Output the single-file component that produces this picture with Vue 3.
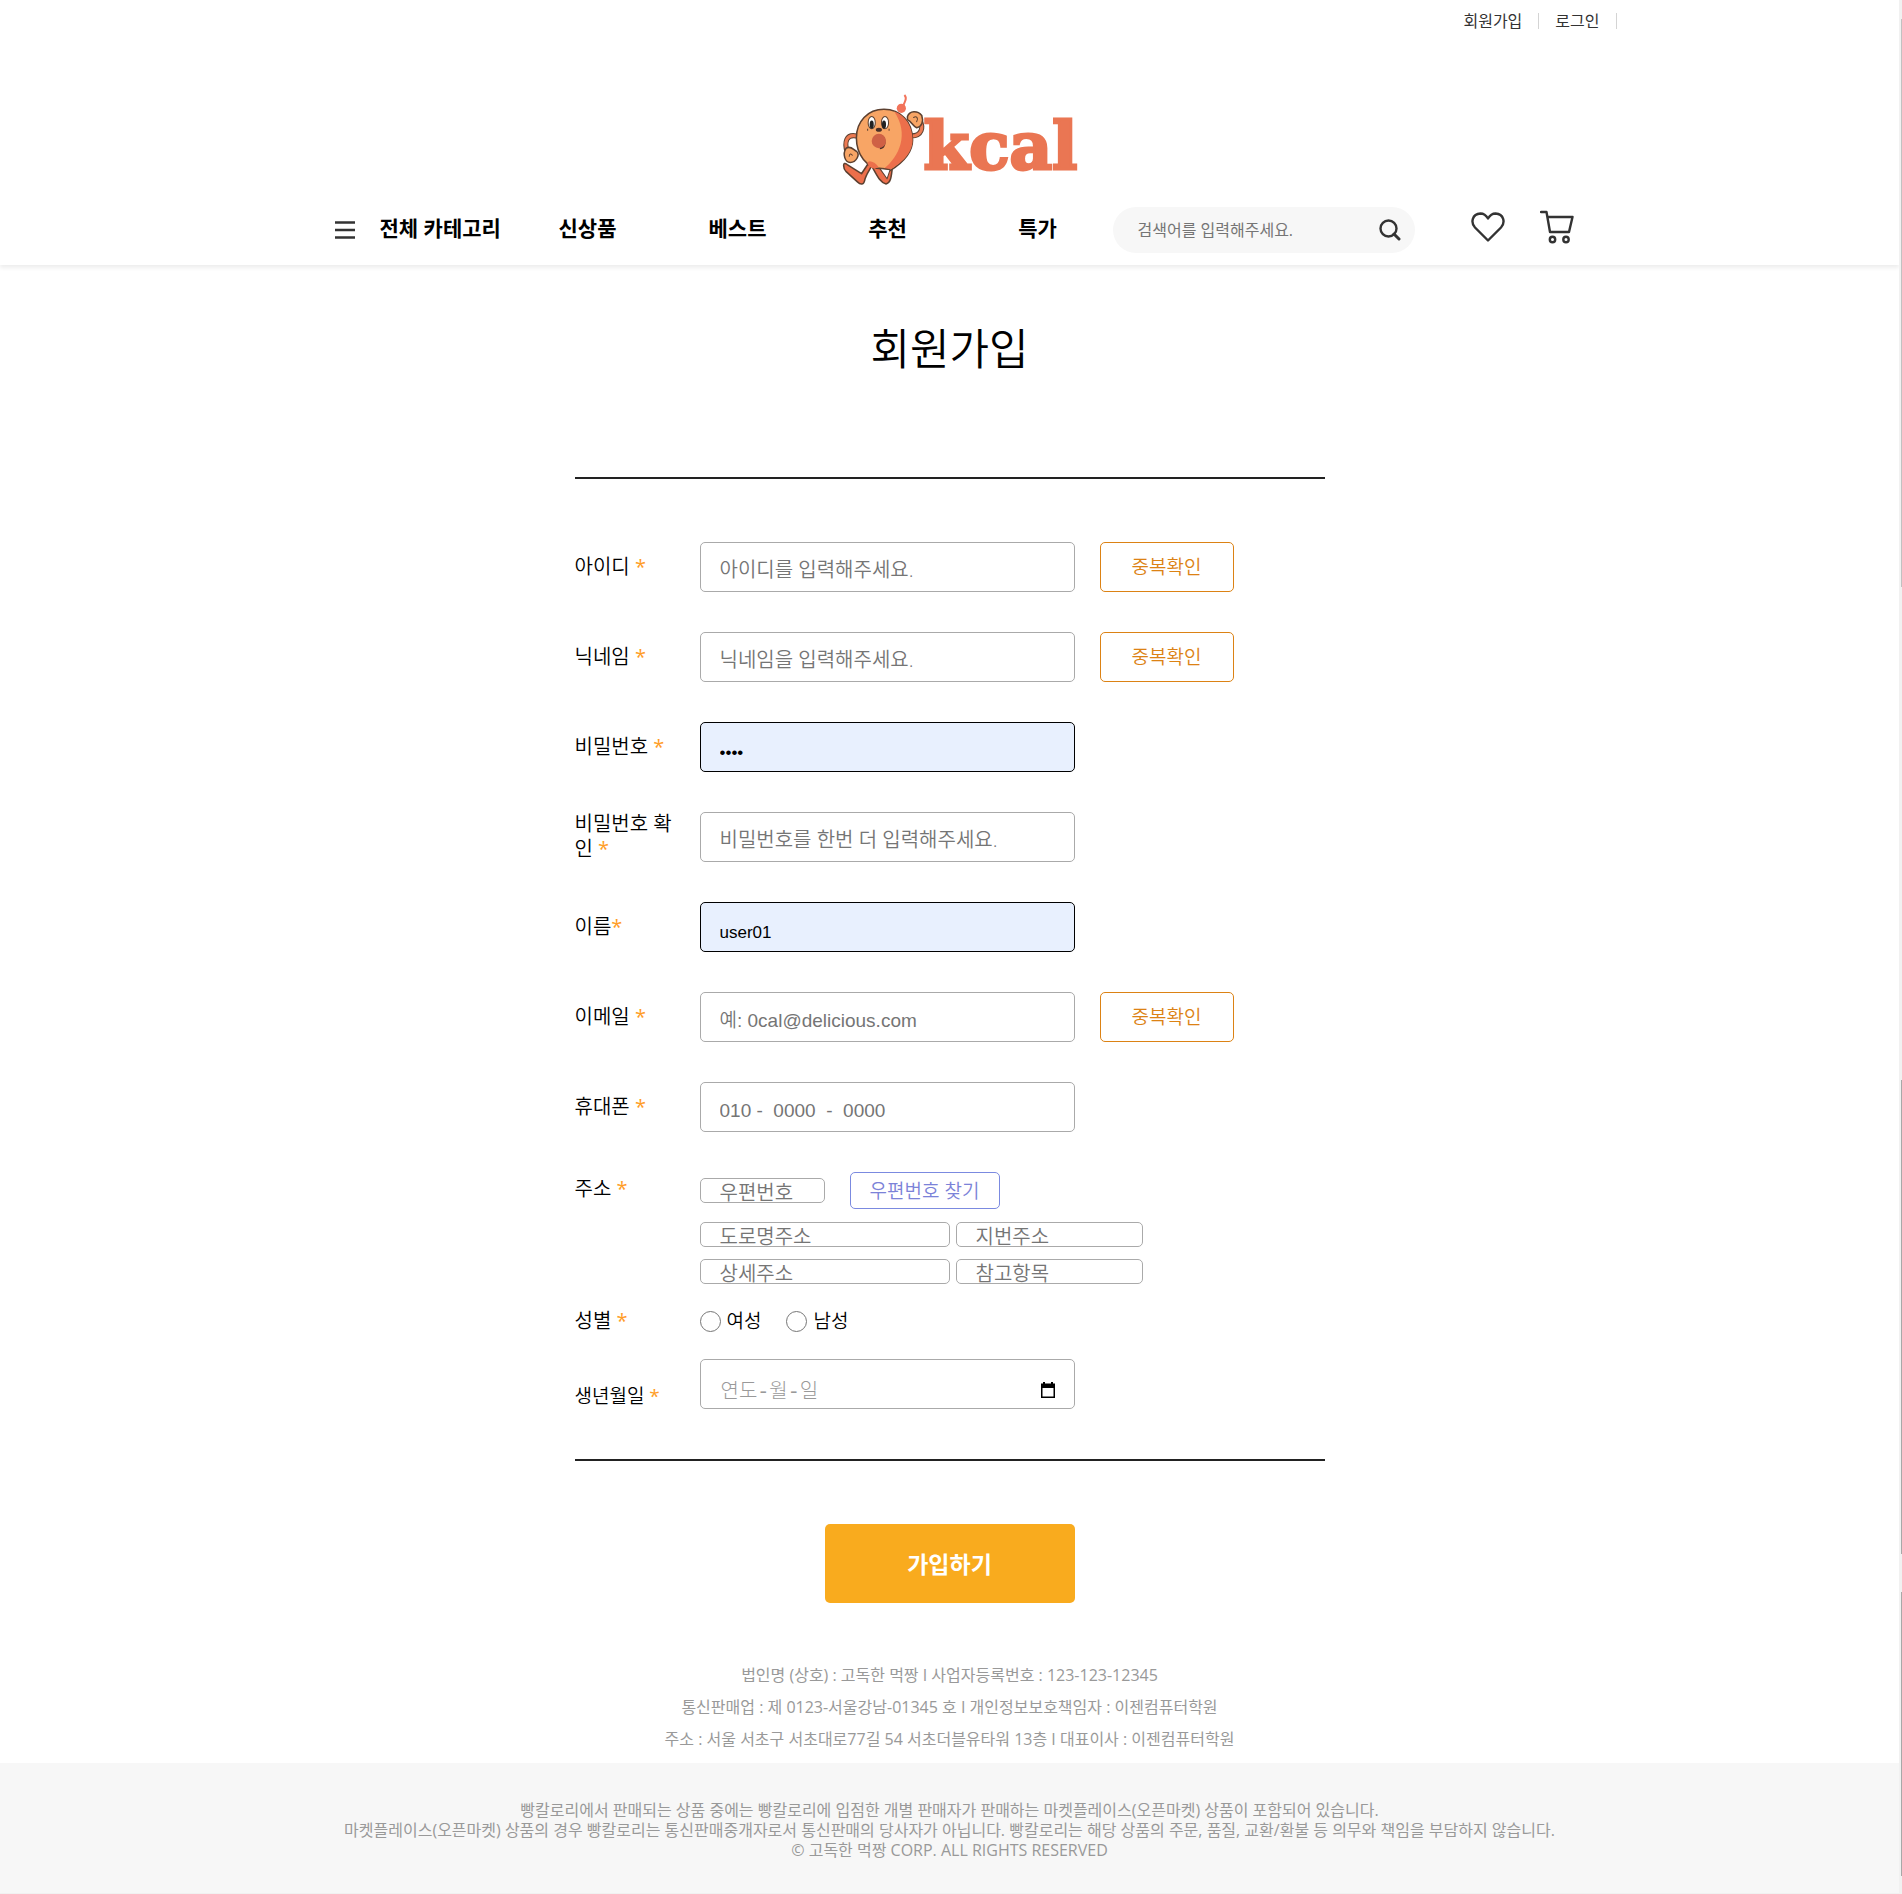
<script setup>
import { ref } from 'vue'

const menus = ['신상품', '베스트', '추천', '특가']

const fields = [
  { id: 'userId', label: '아이디', placeholder: '아이디를 입력해주세요.', check: true },
  { id: 'nickname', label: '닉네임', placeholder: '닉네임을 입력해주세요.', check: true },
  { id: 'password', label: '비밀번호', type: 'password', value: '1234' },
  { id: 'passwordCheck', label: '비밀번호 확인', type: 'password', placeholder: '비밀번호를 한번 더 입력해주세요.' },
  { id: 'userName', label: '이름', value: 'user01', tight: true },
  { id: 'email', label: '이메일', placeholder: '예: 0cal@delicious.com', check: true, latin: true },
  { id: 'phone', label: '휴대폰', placeholder: '010 -  0000  -  0000', latin: true },
]
const values = ref(Object.fromEntries(fields.map((f) => [f.id, f.value || ''])))
const gender = ref('')
</script>

<template>
  <div class="page">
    <div class="content">
      <header class="header">
        <div class="inner">
          <nav class="user-links" aria-label="회원 메뉴">
            <a href="#join">회원가입</a>
            <a href="#login">로그인</a>
          </nav>
          <a href="#home" class="logo" aria-label="kcal">
            <svg class="mascot" viewBox="0 0 84 92" width="86" height="94" aria-hidden="true">
              <g stroke-linecap="round" stroke-linejoin="round">
                <path d="M14 42 C4 40 2 48 5 58" fill="none" stroke="#5c4030" stroke-width="5" />
                <path d="M14 42 C4 40 2 48 5 58" fill="none" stroke="#ec7a52" stroke-width="3" />
                <path d="M68 42 C78 42 80 34 76 26" fill="none" stroke="#5c4030" stroke-width="5" />
                <path d="M68 42 C78 42 80 34 76 26" fill="none" stroke="#ec7a52" stroke-width="3" />
                <path d="M5 70 C0 66 1 74 4 77 L15 87 C18 90 21 90 22 86 C23 80 28 74 29 71 L25 70 L19 79 Z" fill="#ec6f4b" stroke="#5c4030" stroke-width="1.5" />
                <path d="M27 68 C34 80 37 88 43 89 C49 88 48 78 50 68 Z" fill="#ec6f4b" stroke="#5c4030" stroke-width="1.5" />
                <path d="M41 16 C57 16 69 28 69 46 C69 61 55 71 47 76 C45 74 43 74 39 74 C24 74 14 60 14 44 C14 28 25 16 41 16 Z" fill="#f8a565" stroke="#5c4030" stroke-width="1.5" />
                <path d="M51 18 C62 22 69 33 69 46 C69 60 57 69 47 75 C45 74 43 74 41 74 C56 62 66 40 51 18 Z" fill="#ec6f4b" />
                <path d="M37 74 L44 84 L47 75 Z" fill="#fff" stroke="#5c4030" stroke-width="1" />
                <path d="M25 69 C25 65 32 67 36 73 C30 75 26 73 25 69 Z" fill="#ec6f4b" />
                <path d="M4 54 C9 51 11 56 14 57 C18 60 14 68 8 68 C3 68 0 60 4 54 Z" fill="#f8a565" stroke="#5c4030" stroke-width="1.5" />
                <path d="M7 62 C7 59 9 59 10 61" fill="none" stroke="#5c4030" stroke-width="1" />
                <path d="M64 23 C66 17 74 17 78 22 C80 28 78 33 73 34 C69 32 68 28 64 26 Z" fill="#f8a565" stroke="#5c4030" stroke-width="1.5" />
                <path d="M70 24 C73 22 75 25 73 28" fill="none" stroke="#5c4030" stroke-width="1" />
              </g>
              <ellipse cx="29" cy="29" rx="3.5" ry="6" fill="#fff" stroke="#5c4030" />
              <ellipse cx="42" cy="29" rx="3.5" ry="6" fill="#fff" stroke="#5c4030" />
              <ellipse cx="29" cy="31" rx="2" ry="4" fill="#222" />
              <ellipse cx="41" cy="31" rx="2" ry="4" fill="#222" />
              <ellipse cx="36" cy="36" rx="3" ry="2" fill="#4a3028" />
              <path d="M25 35 V37 M46 35 V37" stroke="#5c4030" fill="none" />
              <path d="M36 41 C44 39 45 55 37 55" fill="#4a3028" />
              <circle cx="36" cy="47" r="7" fill="#cf6145" />
              <circle cx="58" cy="15" r="4.5" fill="#f2735a" />
              <path d="M61 2 C65 6 60 9 60 13" fill="none" stroke="#f2735a" stroke-width="2" />
            </svg>
            <span class="wordmark">kcal</span>
          </a>
          <div class="bar">
            <button type="button" class="category">
              <svg viewBox="0 0 20 18" width="20" height="18" aria-hidden="true">
                <path d="M0 1.5 H20 M0 9 H20 M0 16.5 H20" stroke="#333" stroke-width="2.5" />
              </svg>
              <span>전체 카테고리</span>
            </button>
            <nav class="menus" aria-label="주 메뉴">
              <a v-for="menu in menus" :key="menu" href="#menu">{{ menu }}</a>
            </nav>
            <form class="search" role="search" @submit.prevent>
              <input type="text" aria-label="검색어" placeholder="검색어를 입력해주세요." />
              <button type="submit" aria-label="검색">
                <svg viewBox="0 0 22 22" width="22" height="22" aria-hidden="true">
                  <circle cx="9.5" cy="9.5" r="8" fill="none" stroke="#333" stroke-width="2.4" />
                  <path d="M15 15 L20 20" stroke="#333" stroke-width="3" stroke-linecap="round" />
                </svg>
              </button>
            </form>
            <div class="icons">
              <a href="#wish" aria-label="찜한 상품">
                <svg viewBox="0 0 34 30" width="34" height="30" aria-hidden="true">
                  <path d="M17 28.5 L4 15.5 C-0.5 10.5 1 2 9.5 1.5 C13 1.5 15.5 4 17 6.5 C18.5 4 21 1.5 24.5 1.5 C33 2 34.5 10.5 30 15.5 Z" fill="none" stroke="#333" stroke-width="2.4" stroke-linejoin="round" />
                </svg>
              </a>
              <a href="#cart" aria-label="장바구니">
                <svg viewBox="0 0 34 34" width="34" height="34" aria-hidden="true">
                  <path d="M1 2 H6.5 L10 22 H29 L32.5 7 H7.5" fill="none" stroke="#333" stroke-width="2.4" stroke-linejoin="round" stroke-linecap="round" />
                  <circle cx="12.5" cy="29.5" r="2.7" fill="none" stroke="#333" stroke-width="2.4" />
                  <circle cx="26" cy="29.5" r="2.7" fill="none" stroke="#333" stroke-width="2.4" />
                </svg>
              </a>
            </div>
          </div>
        </div>
      </header>

      <main class="main">
        <h1>회원가입</h1>
        <form class="join" @submit.prevent>
          <div class="fields">
            <div v-for="f in fields" :key="f.id" class="row">
              <label :for="f.id">{{ f.label }}<template v-if="!f.tight">&nbsp;</template><em>*</em></label>
              <input
                :id="f.id"
                v-model="values[f.id]"
                :type="f.type || 'text'"
                :placeholder="f.placeholder"
                :class="['box', { filled: f.value, latin: f.latin }]"
              />
              <button v-if="f.check" type="button" class="check">중복확인</button>
            </div>

            <div class="row address">
              <label for="zipcode">주소&nbsp;<em>*</em></label>
              <div class="address-lines">
                <div class="line zip">
                  <input id="zipcode" class="box small zipcode" type="text" placeholder="우편번호" />
                  <button type="button" class="find">우편번호 찾기</button>
                </div>
                <div class="line">
                  <input class="box small wide" type="text" aria-label="도로명주소" placeholder="도로명주소" />
                  <input class="box small half" type="text" aria-label="지번주소" placeholder="지번주소" />
                </div>
                <div class="line">
                  <input class="box small wide" type="text" aria-label="상세주소" placeholder="상세주소" />
                  <input class="box small half" type="text" aria-label="참고항목" placeholder="참고항목" />
                </div>
              </div>
            </div>

            <div class="row gender" role="radiogroup" aria-labelledby="genderLabel">
              <span id="genderLabel" class="label">성별&nbsp;<em>*</em></span>
              <label class="option"><input v-model="gender" type="radio" name="gender" value="F" />여성</label>
              <label class="option"><input v-model="gender" type="radio" name="gender" value="M" />남성</label>
            </div>

            <div class="row birth">
              <label for="birth">생년월일&nbsp;<em>*</em></label>
              <div class="box date">
                <input id="birth" type="text" placeholder="연도-월-일" />
                <button type="button" aria-label="달력 열기">
                  <svg viewBox="0 0 14 16" width="14" height="16" aria-hidden="true">
                    <path d="M0 1.5 H2 V0 H4 V1.5 H10 V0 H12 V1.5 H14 V16 H0 Z M1.5 6 V14.5 H12.5 V6 Z" fill="#000" fill-rule="evenodd" />
                  </svg>
                </button>
              </div>
            </div>
          </div>
          <button type="submit" class="submit">가입하기</button>
        </form>
      </main>

      <footer>
        <div class="company">
          <p>법인명 (상호) : 고독한 먹짱 I 사업자등록번호 : 123-123-12345</p>
          <p>통신판매업 : 제 0123-서울강남-01345 호 I 개인정보보호책임자 : 이젠컴퓨터학원</p>
          <p>주소 : 서울 서초구 서초대로77길 54 서초더블유타워 13층 I 대표이사 : 이젠컴퓨터학원</p>
        </div>
        <div class="notice">
          <p>빵칼로리에서 판매되는 상품 중에는 빵칼로리에 입점한 개별 판매자가 판매하는 마켓플레이스(오픈마켓) 상품이 포함되어 있습니다.</p>
          <p>마켓플레이스(오픈마켓) 상품의 경우 빵칼로리는 통신판매중개자로서 통신판매의 당사자가 아닙니다. 빵칼로리는 해당 상품의 주문, 품질, 교환/환불 등 의무와 책임을 부담하지 않습니다.</p>
          <p>© 고독한 먹짱 CORP. ALL RIGHTS RESERVED</p>
        </div>
      </footer>
    </div>
    <div class="track" aria-hidden="true"></div>
  </div>
</template>

<style>
body {
  margin: 0;
  background: #fff;
}
</style>

<style scoped>
.page {
  display: flex;
  font-family: "Open Sans", "Noto Sans CJK KR", sans-serif;
  font-weight: 400;
  color: #000;
}
.page * {
  box-sizing: border-box;
}
.content {
  flex: 1;
  min-width: 0;
}
.track {
  width: 3px;
  padding-left: 2px;
  background-color: #f1f1f1;
  background-origin: content-box;
  background-repeat: no-repeat;
  background-image: linear-gradient(
    transparent 1%, #c1c1c1 1%, #c1c1c1 31%,
    transparent 31%, transparent 57%,
    #a8a8a8 57%, #a8a8a8 82%,
    transparent 82%, transparent 84%,
    #a8a8a8 84%, #a8a8a8 99%, transparent 99%
  );
}
a {
  color: inherit;
  text-decoration: none;
}
button,
input {
  margin: 0;
  padding: 0;
  border: 0;
  background: none;
  font: inherit;
  color: inherit;
}
button {
  cursor: pointer;
}
input {
  outline: 0;
  min-width: 0;
}
input::placeholder {
  color: #757575;
  opacity: 1;
}
p,
h1 {
  margin: 0;
}
.header {
  box-shadow: 0 3px 4px rgba(0, 0, 0, 0.07);
}
.inner {
  width: 100%;
  max-width: 1334px;
  margin: 0 auto;
  height: 265px;
  display: flex;
  flex-direction: column;
}
.user-links {
  display: flex;
  justify-content: flex-end;
  padding-top: 9px;
  font-size: 16px;
  line-height: 24px;
  color: #333;
}
.user-links a {
  display: flex;
  align-items: center;
}
.user-links a::after {
  content: "";
  width: 1px;
  height: 16px;
  margin: 0 16px;
  background: #d4d4d4;
}
.user-links a:last-child::after {
  margin-right: 0;
}
.logo {
  align-self: center;
  display: flex;
  align-items: flex-start;
  margin-top: 60px;
  padding-left: 20px;
}
.mascot {
  display: block;
}
.wordmark {
  font-family: "DejaVu Serif", serif;
  font-weight: 700;
  font-size: 66px;
  line-height: 106px;
  margin-left: -4px;
  color: #ea7653;
  -webkit-text-stroke: 3px #ea7653;
  stroke-linejoin: round;
}
.bar {
  display: flex;
  align-items: center;
  height: 46px;
  margin-top: 8px;
  padding-left: 52px;
}
.category {
  display: flex;
  align-items: center;
  gap: 25px;
  width: 178px;
  font-weight: 700;
  font-size: 21px;
  line-height: 32px;
  white-space: nowrap;
}
.category span,
.menus {
  padding-bottom: 5px;
}
.menus {
  display: flex;
  font-weight: 700;
  font-size: 21px;
  line-height: 32px;
}
.menus a {
  width: 150px;
  text-align: center;
}
.search {
  display: flex;
  align-items: center;
  width: 302px;
  height: 46px;
  padding: 0 14px 0 25px;
  border-radius: 23px;
  background: #f7f7f7;
  font-size: 16px;
}
.search input {
  flex: 1;
}
.search button,
.icons a {
  display: flex;
}
.icons {
  display: flex;
  align-items: center;
  gap: 35px;
  margin-left: 56px;
  padding-bottom: 6px;
}
.main {
  padding: 52px 0 56px;
}
h1 {
  font-size: 43px;
  font-weight: 350;
  line-height: 64px;
  text-align: center;
}
.join {
  width: 750px;
  margin: 96px auto 0;
}
.fields {
  display: flex;
  flex-direction: column;
  padding: 63px 0 50px;
  border-top: 2px solid #222;
  border-bottom: 2px solid #222;
  font-weight: 350;
}
.row {
  display: flex;
  align-items: center;
  margin-bottom: 40px;
}
.row > label:first-child,
.label {
  flex: none;
  width: 125px;
  margin-top: -2px;
  padding-right: 25px;
  font-size: 20px;
  line-height: 25px;
}
em {
  font-style: normal;
  font-weight: 400;
  color: #ff9d27;
}
.box {
  width: 375px;
  height: 50px;
  padding: 5px 19px 0;
  border: 1px solid #aaa;
  border-radius: 5px;
  font-size: 20px;
}
.latin {
  font-family: "Liberation Sans", "Noto Sans CJK KR", sans-serif;
  font-size: 19px;
  padding-top: 8px;
}
.filled {
  padding-top: 11px;
  border-color: #000;
  background: #e8f0fe;
  font-family: "Liberation Sans", sans-serif;
  font-size: 17px;
}
.check {
  width: 134px;
  height: 50px;
  padding-bottom: 2px;
  margin-left: 25px;
  border: 1px solid #dc8214;
  border-radius: 5px;
  color: #dc8214;
  font-size: 19px;
}
.address {
  align-items: flex-start;
  margin-bottom: 24px;
}
.row.address > label {
  line-height: 37px;
}
.line {
  display: flex;
  gap: 6px;
  margin-top: 12px;
}
.line.zip {
  align-items: center;
  gap: 25px;
  margin: 0 0 13px;
}
.small {
  height: 25px;
  line-height: 30px;
}
.zipcode {
  width: 125px;
}
.wide {
  width: 250px;
}
.half {
  width: 187px;
}
.find {
  width: 150px;
  height: 37px;
  padding-bottom: 2px;
  border: 1px solid #7b8ae0;
  border-radius: 5px;
  color: #7b82d8;
  font-size: 19px;
}
.gender {
  margin-bottom: 24px;
}
.option {
  display: flex;
  align-items: center;
  gap: 6px;
  margin-right: 25px;
  font-size: 19px;
  line-height: 27px;
}
.option input {
  appearance: none;
  width: 21px;
  height: 21px;
  border: 1px solid #767676;
  border-radius: 50%;
}
.option input:checked {
  border: 6px solid #f9ab1e;
}
.birth {
  margin-bottom: 0;
}
.row.birth > label {
  padding-top: 26px;
  font-size: 19px;
}
.date {
  display: flex;
  align-items: center;
  padding: 17px 19px 0 20px;
  font-family: "Liberation Mono", "Noto Sans CJK KR", monospace;
  font-weight: 300;
}
.date input {
  flex: 1;
}
.date input::placeholder {
  color: #999;
}
.submit {
  display: block;
  width: 250px;
  height: 79px;
  padding-bottom: 2px;
  margin: 63px auto 0;
  border-radius: 5px;
  background: #f9ab1e;
  color: #fff;
  font-size: 23px;
  font-weight: 700;
}
footer {
  font-size: 16px;
  color: #999;
  text-align: center;
}
.company {
  line-height: 32px;
  padding-bottom: 8px;
}
.notice {
  padding: 37px 0 33px;
  border-bottom: 2px solid #f1f1f1;
  background: #f7f7f7;
  line-height: 20px;
}
</style>
